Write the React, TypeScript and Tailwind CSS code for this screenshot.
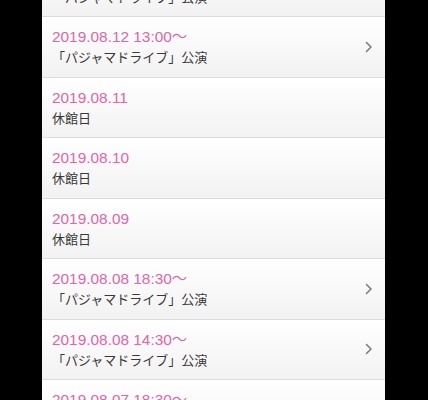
import React from "react"

type Item = {
  date: string
  title: string
  link?: boolean
}

const items: Item[] = [
  { date: "2019.08.13 13:00〜", title: "「パジャマドライブ」公演", link: true },
  { date: "2019.08.12 13:00〜", title: "「パジャマドライブ」公演", link: true },
  { date: "2019.08.11", title: "休館日" },
  { date: "2019.08.10", title: "休館日" },
  { date: "2019.08.09", title: "休館日" },
  { date: "2019.08.08 18:30〜", title: "「パジャマドライブ」公演", link: true },
  { date: "2019.08.08 14:30〜", title: "「パジャマドライブ」公演", link: true },
  { date: "2019.08.07 18:30〜", title: "「パジャマドライブ」公演", link: true },
]

const Chevron = () => (
  <svg width="8" height="12" viewBox="0 0 8 12" className="shrink-0">
    <path d="M1.5 1.5 L6 6 L1.5 10.5" fill="none" stroke="#7a7a7a" strokeWidth="1.5" strokeLinecap="round" strokeLinejoin="round" />
  </svg>
)

const Row = ({ item }: { item: Item }) => (
  <div className="flex items-center h-[60.5px] pl-[10px] pr-[12px] border-b border-[#dcdcdc] bg-gradient-to-b from-white to-[#f2f2f2]">
    <div className="flex-1 flex flex-col pt-[1px]">
      <p className="text-[15.4px] leading-[20px] text-[#e066a6]">{item.date}</p>
      <p className="mt-[2px] text-[13px] leading-[18px] text-[#383838]">{item.title}</p>
    </div>
    {item.link && <Chevron />}
  </div>
)

export default function App() {
  return (
    <div
      className="w-[428px] h-[400px] overflow-hidden bg-black flex justify-center"
      style={{ fontFamily: '"Liberation Sans", "Noto Sans CJK JP", sans-serif' }}
    >
      <div className="w-[343px] ml-[-1px] bg-white">
        <div className="-mt-[43.5px] flex flex-col">
          {items.map((item, i) => (
            <Row key={i} item={item} />
          ))}
        </div>
      </div>
    </div>
  )
}
